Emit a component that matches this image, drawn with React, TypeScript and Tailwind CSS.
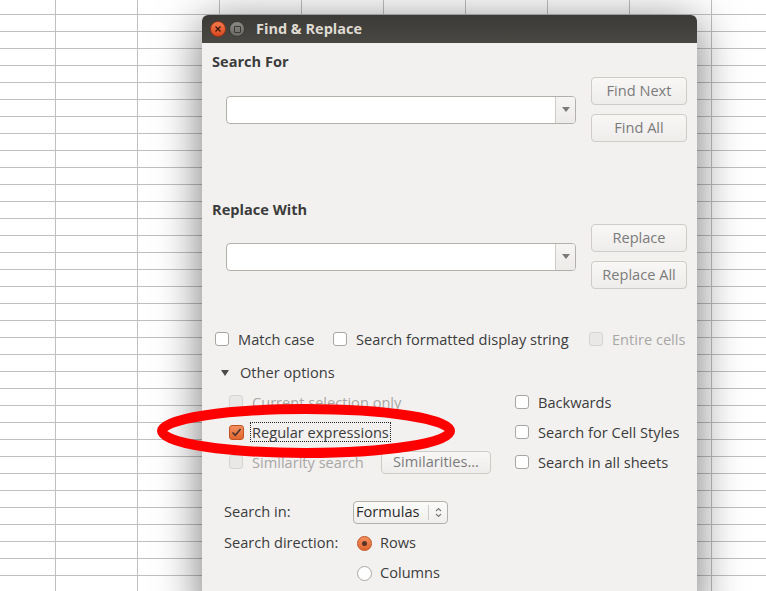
import React from "react";

const ROWS = Array.from({ length: 35 }, (_, i) => i);
const COLS = Array.from({ length: 10 }, (_, i) => i);

function Sheet() {
  return (
    <div className="flex flex-col bg-white">
      {ROWS.map((r) => (
        <div key={r} className={`flex ${r === 0 ? "h-[15px]" : "h-[17px]"}`}>
          {COLS.map((c) => (
            <div
              key={c}
              className={`shrink-0 border-b border-r border-[#c0c0c0] ${c === 0 ? "w-[56px]" : "w-[82px]"}`}
            />
          ))}
        </div>
      ))}
    </div>
  );
}

function Check({ checked = false, disabled = false }: { checked?: boolean; disabled?: boolean }) {
  if (checked) {
    return (
      <span className="flex h-[15px] w-[15px] shrink-0 items-center justify-center rounded-[3px] border border-[#c0521f] bg-gradient-to-b from-[#f3905f] to-[#e2652f]">
        <svg width="11" height="11" viewBox="0 0 11 11">
          <path d="M1.5 5.5 L4.3 8.3 L9.6 2" fill="none" stroke="#4a342c" strokeWidth="1.7" />
        </svg>
      </span>
    );
  }
  return (
    <span
      className={`block h-[14px] w-[14px] shrink-0 rounded-[3px] border ${
        disabled ? "border-[#d6d4d1] bg-[#e9e8e6]" : "border-[#a8a6a2] bg-white"
      }`}
    />
  );
}

function Radio({ on = false }: { on?: boolean }) {
  if (on) {
    return (
      <span className="flex h-[15px] w-[15px] shrink-0 items-center justify-center rounded-full border border-[#c0521f] bg-gradient-to-b from-[#f3905f] to-[#e2652f]">
        <span className="h-[5px] w-[5px] rounded-full bg-[#5a3428]" />
      </span>
    );
  }
  return <span className="block h-[15px] w-[15px] shrink-0 rounded-full border border-[#a8a6a2] bg-white" />;
}

function Btn({ children, className = "" }: { children: React.ReactNode; className?: string }) {
  return (
    <div
      className={`flex h-[28px] items-center justify-center rounded-[4px] border border-[#cfccc7] bg-gradient-to-b from-[#f8f7f6] to-[#eeedeb] text-[#7b7b7b] ${className}`}
    >
      {children}
    </div>
  );
}

function Combo() {
  return (
    <div className="flex h-[28px] w-[350px] overflow-hidden rounded-[4px] border border-[#b3b0ab] bg-white">
      <div className="flex-1" />
      <div className="flex w-[20px] items-center justify-center border-l border-[#cfccc7] bg-gradient-to-b from-[#f6f5f4] to-[#ecebe9]">
        <svg width="8" height="5" viewBox="0 0 8 5">
          <path d="M0 0 H8 L4 5 Z" fill="#7a7a7a" />
        </svg>
      </div>
    </div>
  );
}

function Opt({
  label,
  checked,
  disabled,
  focus,
}: {
  label: string;
  checked?: boolean;
  disabled?: boolean;
  focus?: boolean;
}) {
  return (
    <div className="flex items-center">
      <Check checked={checked} disabled={disabled} />
      <span
        className={`whitespace-nowrap leading-[18px] ${disabled ? "text-[#a9a7a4]" : "text-[#3c3c3c]"} ${
          focus ? "ml-[6px] border border-dotted border-[#222] px-[1px]" : "ml-[9px]"
        }`}
      >
        {label}
      </span>
    </div>
  );
}

function Dialog() {
  return (
    <div className="absolute left-[202px] top-[15px] flex h-[600px] w-[495px] flex-col rounded-t-[6px] shadow-[0_8px_46px_rgba(0,0,0,0.55)]">
      {/* title bar */}
      <div className="flex h-[28px] items-center rounded-t-[6px] bg-gradient-to-b from-[#3b3a36] to-[#4a4843] pl-[8px]">
        <span className="flex h-[16px] w-[16px] items-center justify-center rounded-full border border-[#9b3414] bg-gradient-to-b from-[#f37b4d] to-[#d9471f]">
          <svg width="6" height="6" viewBox="0 0 6 6">
            <path d="M0.5 0.5 L5.5 5.5 M5.5 0.5 L0.5 5.5" stroke="#3a1a10" strokeWidth="1.3" />
          </svg>
        </span>
        <span className="ml-[3px] flex h-[16px] w-[16px] items-center justify-center rounded-full border border-[#3a3935] bg-gradient-to-b from-[#8a8883] to-[#6c6a65]">
          <span className="h-[7px] w-[7px] rounded-[1px] border border-[#3a3935]" />
        </span>
        <span className="ml-[11px] text-[14.5px] font-bold text-[#dfdbd2]">Find &amp; Replace</span>
      </div>

      {/* body */}
      <div className="flex flex-1 flex-col bg-[#f2f1f0] px-[10px] pt-[8px] text-[14.6px] text-[#3c3c3c]">
        <div className="h-[20px] font-bold leading-[20px]">Search For</div>
        <div className="mt-[6px] flex items-center">
          <div className="ml-[14px]">
            <Combo />
          </div>
          <div className="ml-[15px] flex w-[97px] flex-col gap-[9px]">
            <Btn>Find Next</Btn>
            <Btn>Find All</Btn>
          </div>
        </div>

        <div className="mt-[57px] h-[20px] font-bold leading-[20px]">Replace With</div>
        <div className="mt-[5px] flex items-center">
          <div className="ml-[14px]">
            <Combo />
          </div>
          <div className="ml-[15px] flex w-[97px] flex-col gap-[9px]">
            <Btn>Replace</Btn>
            <Btn>Replace All</Btn>
          </div>
        </div>

        <div className="mt-[40px] flex h-[20px] items-center pl-[3px]">
          <div className="w-[118px]">
            <Opt label="Match case" />
          </div>
          <div className="w-[256px]">
            <Opt label="Search formatted display string" />
          </div>
          <Opt label="Entire cells" disabled />
        </div>

        <div className="mt-[14px] flex h-[20px] items-center pl-[9px]">
          <svg width="8" height="6" viewBox="0 0 8 6">
            <path d="M0 0 H8 L4 6 Z" fill="#4a4a4a" />
          </svg>
          <span className="ml-[11px]">Other options</span>
        </div>

        <div className="mt-[4px] grid grid-cols-[286px_1fr] pl-[17px]">
          <div className="flex h-[30px] items-center">
            <Opt label="Current selection only" disabled />
          </div>
          <div className="flex h-[30px] items-center">
            <Opt label="Backwards" />
          </div>
          <div className="flex h-[30px] items-center">
            <Opt label="Regular expressions" checked focus />
          </div>
          <div className="flex h-[30px] items-center">
            <Opt label="Search for Cell Styles" />
          </div>
          <div className="flex h-[30px] items-center">
            <div className="w-[152px]">
              <Opt label="Similarity search" disabled />
            </div>
            <div className="flex h-[23px] w-[110px] items-center justify-center rounded-[4px] border border-[#cfccc7] bg-gradient-to-b from-[#f8f7f6] to-[#eeedeb] text-[#7b7b7b]">
              Similarities...
            </div>
          </div>
          <div className="flex h-[30px] items-center">
            <Opt label="Search in all sheets" />
          </div>
        </div>

        <div className="mt-[20px] grid grid-cols-[129px_1fr] pl-[12px]">
          <div className="flex h-[30px] items-center">Search in:</div>
          <div className="flex h-[30px] items-center">
            <div className="flex h-[23px] w-[95px] items-center rounded-[4px] border border-[#b3b0ab] bg-gradient-to-b from-[#fbfbfa] to-[#f0efed]">
              <span className="ml-[2px] flex-1 text-[#2c2c2c]">Formulas</span>
              <span className="flex h-[15px] w-[19px] items-center justify-center border-l border-[#cfccc7]">
                <svg width="7" height="11" viewBox="0 0 7 11">
                  <path d="M1 4 L3.5 1.5 L6 4 M1 7 L3.5 9.5 L6 7" fill="none" stroke="#7a7a7a" strokeWidth="1.1" />
                </svg>
              </span>
            </div>
          </div>
          <div className="mt-[1px] flex h-[30px] items-center">Search direction:</div>
          <div className="mt-[1px] flex h-[30px] items-center pl-[4px]">
            <Radio on />
            <span className="ml-[8px]">Rows</span>
          </div>
          <div />
          <div className="flex h-[30px] items-center pl-[4px]">
            <Radio />
            <span className="ml-[8px]">Columns</span>
          </div>
        </div>
      </div>
    </div>
  );
}

export default function App() {
  return (
    <div className="relative h-[591px] w-[766px] overflow-hidden font-['Open_Sans',sans-serif]">
      <Sheet />
      <Dialog />
      {/* red annotation ring */}
      <svg className="absolute left-[155px] top-[403px]" width="304" height="58" viewBox="0 0 304 58">
        <ellipse cx="151" cy="28" rx="144" ry="22" fill="none" stroke="#ff0000" strokeWidth="10" />
      </svg>
    </div>
  );
}
